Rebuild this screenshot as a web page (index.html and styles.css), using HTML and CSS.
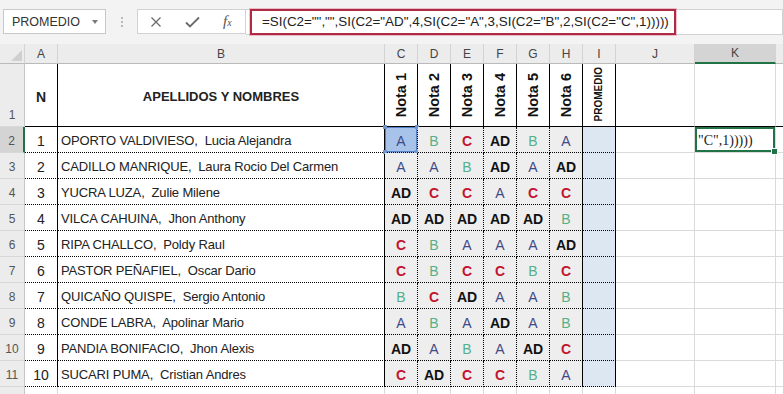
FILE: index.html
```html
<!DOCTYPE html>
<html lang="es">
<head>
    <meta charset="UTF-8">
    <title>Registro de notas</title>
    <link rel="stylesheet" href="styles.css">
</head>
<body>
    <!-- Formula bar -->
    <div class="topbar">
        <div class="namebox">
            <span class="label">PROMEDIO</span>
            <span class="caret"></span>
        </div>
        <div class="grip"><i></i><i></i><i></i></div>
        <div class="fxbox">
            <svg class="icon" width="12" height="12" viewBox="0 0 12 12">
                <path d="M1.5 1.5 L10.5 10.5 M10.5 1.5 L1.5 10.5" stroke="#6b6b6b" stroke-width="1.3" fill="none"/>
            </svg>
            <svg class="icon check" width="15" height="12" viewBox="0 0 15 12">
                <path d="M1 6.5 L5 10.5 L14 1.5" stroke="#6b6b6b" stroke-width="1.8" fill="none"/>
            </svg>
            <span class="fx">f<small>x</small></span>
        </div>
        <div class="formulabar">
            <div class="formula">=SI(C2="","",SI(C2="AD",4,SI(C2="A",3,SI(C2="B",2,SI(C2="C",1)))))</div>
        </div>
    </div>

    <!-- Sheet -->
    <table class="sheet">
        <thead>
            <tr class="col-heads">
                <th class="corner w-row"><svg width="11" height="11" viewBox="0 0 11 11"><path d="M11 0 L11 11 L0 11 Z" fill="#cfcfcf"/></svg></th>
                <th class="w-a">A</th>
                <th class="w-b">B</th>
                <th class="w-n">C</th>
                <th class="w-n">D</th>
                <th class="w-n">E</th>
                <th class="w-n">F</th>
                <th class="w-n">G</th>
                <th class="w-n">H</th>
                <th class="w-n">I</th>
                <th class="w-j">J</th>
                <th class="w-k sel">K</th>
                <th class="w-l"></th>
            </tr>
        </thead>
        <tbody>
            <tr class="title">
                <th class="rh">1</th>
                <td class="num head">N</td>
                <td class="name head">APELLIDOS Y NOMBRES</td>
                <td class="vert"><span>Nota 1</span></td>
                <td class="vert"><span>Nota 2</span></td>
                <td class="vert"><span>Nota 3</span></td>
                <td class="vert"><span>Nota 4</span></td>
                <td class="vert"><span>Nota 5</span></td>
                <td class="vert"><span>Nota 6</span></td>
                <td class="vert prom-head"><span>PROMEDIO</span></td>
                <td class="cell"></td><td class="cell"></td><td class="cell"></td>
            </tr>
            <tr>
                <th class="rh sel">2</th>
                <td class="num">1</td>
                <td class="name">OPORTO VALDIVIESO,  Lucia Alejandra</td>
                <td class="g a ref">A<i class="h tl"></i><i class="h tr"></i><i class="h bl"></i><i class="h br"></i></td>
                <td class="g b">B</td><td class="g c">C</td><td class="g ad">AD</td><td class="g b">B</td><td class="g a">A</td>
                <td class="prom"></td>
                <td class="cell"></td>
                <td class="cell active">"C",1)))))<i class="fill"></i></td>
                <td class="cell"></td>
            </tr>
            <tr>
                <th class="rh">3</th>
                <td class="num">2</td>
                <td class="name">CADILLO MANRIQUE,  Laura Rocio Del Carmen</td>
                <td class="g a">A</td><td class="g a">A</td><td class="g b">B</td><td class="g ad">AD</td><td class="g a">A</td><td class="g ad">AD</td>
                <td class="prom"></td>
                <td class="cell"></td><td class="cell"></td><td class="cell"></td>
            </tr>
            <tr>
                <th class="rh">4</th>
                <td class="num">3</td>
                <td class="name">YUCRA LUZA,  Zulie Milene</td>
                <td class="g ad">AD</td><td class="g c">C</td><td class="g c">C</td><td class="g a">A</td><td class="g c">C</td><td class="g c">C</td>
                <td class="prom"></td>
                <td class="cell"></td><td class="cell"></td><td class="cell"></td>
            </tr>
            <tr>
                <th class="rh">5</th>
                <td class="num">4</td>
                <td class="name">VILCA CAHUINA,  Jhon Anthony</td>
                <td class="g ad">AD</td><td class="g ad">AD</td><td class="g ad">AD</td><td class="g ad">AD</td><td class="g ad">AD</td><td class="g b">B</td>
                <td class="prom"></td>
                <td class="cell"></td><td class="cell"></td><td class="cell"></td>
            </tr>
            <tr>
                <th class="rh">6</th>
                <td class="num">5</td>
                <td class="name">RIPA CHALLCO,  Poldy Raul</td>
                <td class="g c">C</td><td class="g b">B</td><td class="g a">A</td><td class="g a">A</td><td class="g a">A</td><td class="g ad">AD</td>
                <td class="prom"></td>
                <td class="cell"></td><td class="cell"></td><td class="cell"></td>
            </tr>
            <tr>
                <th class="rh">7</th>
                <td class="num">6</td>
                <td class="name">PASTOR PEÑAFIEL,  Oscar Dario</td>
                <td class="g c">C</td><td class="g b">B</td><td class="g c">C</td><td class="g c">C</td><td class="g b">B</td><td class="g c">C</td>
                <td class="prom"></td>
                <td class="cell"></td><td class="cell"></td><td class="cell"></td>
            </tr>
            <tr>
                <th class="rh">8</th>
                <td class="num">7</td>
                <td class="name">QUICAÑO QUISPE,  Sergio Antonio</td>
                <td class="g b">B</td><td class="g c">C</td><td class="g ad">AD</td><td class="g a">A</td><td class="g a">A</td><td class="g b">B</td>
                <td class="prom"></td>
                <td class="cell"></td><td class="cell"></td><td class="cell"></td>
            </tr>
            <tr>
                <th class="rh">9</th>
                <td class="num">8</td>
                <td class="name">CONDE LABRA,  Apolinar Mario</td>
                <td class="g a">A</td><td class="g b">B</td><td class="g a">A</td><td class="g ad">AD</td><td class="g a">A</td><td class="g b">B</td>
                <td class="prom"></td>
                <td class="cell"></td><td class="cell"></td><td class="cell"></td>
            </tr>
            <tr>
                <th class="rh">10</th>
                <td class="num">9</td>
                <td class="name">PANDIA BONIFACIO,  Jhon Alexis</td>
                <td class="g ad">AD</td><td class="g a">A</td><td class="g b">B</td><td class="g a">A</td><td class="g ad">AD</td><td class="g c">C</td>
                <td class="prom"></td>
                <td class="cell"></td><td class="cell"></td><td class="cell"></td>
            </tr>
            <tr>
                <th class="rh">11</th>
                <td class="num">10</td>
                <td class="name">SUCARI PUMA,  Cristian Andres</td>
                <td class="g c">C</td><td class="g ad">AD</td><td class="g c">C</td><td class="g c">C</td><td class="g b">B</td><td class="g a">A</td>
                <td class="prom"></td>
                <td class="cell"></td><td class="cell"></td><td class="cell"></td>
            </tr>
            <!-- row 12 only peeks in at the bottom edge -->
            <tr class="empty">
                <th class="rh"></th>
                <td class="cell"></td><td class="cell"></td>
                <td class="cell"></td><td class="cell"></td><td class="cell"></td><td class="cell"></td><td class="cell"></td><td class="cell"></td><td class="cell"></td>
                <td class="cell"></td><td class="cell"></td><td class="cell"></td>
            </tr>
        </tbody>
    </table>
</body>
</html>
```

FILE: styles.css
```css
/* Global */
body {
    margin: 0;
    width: 783px;
    height: 394px;
    overflow: hidden;
    background-color: #f3f3f3;
    font-family: "Liberation Sans", Arial, sans-serif;
    color: #222;
}

/* Formula bar */
.topbar {
    display: flex;
    align-items: flex-start;
    height: 44px;
    padding: 9px 0 0 3px;
    box-sizing: border-box;
}

.namebox {
    width: 103px;
    height: 25px;
    box-sizing: border-box;
    border: 1px solid #c9c9c9;
    background-color: #fff;
    display: flex;
    align-items: center;
    padding-left: 8px;
    font-size: 12.5px;
    color: #333;
}

.namebox .label {
    flex: 1;
}

.caret {
    width: 0;
    height: 0;
    border-left: 3.5px solid transparent;
    border-right: 3.5px solid transparent;
    border-top: 4px solid #7a7a7a;
    margin-right: 7px;
}

.grip {
    width: 31px;
    display: flex;
    flex-direction: column;
    align-items: center;
    gap: 2px;
    padding-top: 8px;
}

.grip i {
    width: 2px;
    height: 2px;
    background-color: #b8b8b8;
}

.fxbox {
    width: 109px;
    height: 25px;
    box-sizing: border-box;
    border: 1px solid #d2d2d2;
    background-color: #fff;
    display: flex;
    align-items: center;
    padding-left: 12px;
}

.fxbox .check {
    margin-left: 23px;
}

.fx {
    margin-left: 23px;
    font-family: "Liberation Serif", serif;
    font-style: italic;
    font-size: 15px;
    color: #555;
}

.fx small {
    font-size: 10px;
}

.formulabar {
    flex: 1;
    height: 26px;
    box-sizing: border-box;
    background-color: #fff;
    border: 1px solid #d2d2d2;
    border-left: none;
    display: flex;
}

.formula {
    margin-left: 4px;
    margin-top: -1px;
    width: 426px;
    height: 26px;
    box-sizing: border-box;
    border: 2px solid #ad2c44;
    box-shadow: 0 0 0 1px rgba(230, 140, 160, 0.55);
    padding-left: 10px;
    font-size: 13.4px;
    line-height: 22px;
    color: #222;
    white-space: nowrap;
}

/* Sheet */
.sheet {
    border-collapse: separate;
    border-spacing: 0;
    table-layout: fixed;
    width: 796px;
    background-color: #fff;
}

.sheet th,
.sheet td {
    box-sizing: border-box;
    padding: 0;
}

.w-row { width: 25px; }
.w-a { width: 33px; }
.w-b { width: 327px; }
.w-n { width: 33px; }
.w-j { width: 79px; }
.w-k { width: 81px; }
.w-l { width: 20px; }

.sheet tr {
    height: 26px;
}

.sheet tr.col-heads {
    height: 20px;
}

.sheet tr.title {
    height: 63px;
}

.sheet tr.empty {
    height: 20px;
}

.col-heads th {
    height: 20px;
    background-color: #ececec;
    border-right: 1px solid #d3d3d3;
    border-bottom: 1px solid #bababa;
    font-weight: normal;
    font-size: 12px;
    line-height: 14px;
    color: #444;
}

.col-heads th.corner {
    text-align: right;
    vertical-align: bottom;
    padding: 0 2px 2px 0;
    line-height: 0;
}

.col-heads th.sel {
    background-color: #d4d4d4;
    border-bottom: 2px solid #217346;
}

.rh {
    background-color: #ececec;
    border-right: 1px solid #c6c6c6;
    border-bottom: 1px solid #d8d8d8;
    font-weight: normal;
    font-size: 12px;
    color: #555;
    vertical-align: bottom;
    padding-bottom: 4px !important;
    line-height: 14px;
}

.rh.sel {
    background-color: #d4d4d4;
    border-right: 2px solid #217346;
}

/* bordered block A:I */
.num,
.name,
.g,
.prom,
.vert {
    border-right: 1px solid #000;
    border-bottom: 1px dotted #000;
    vertical-align: bottom;
    line-height: 16px;
    padding-bottom: 3px !important;
}

.num {
    text-align: center;
    font-size: 14px;
}

.name {
    font-size: 13px;
    letter-spacing: -0.15px;
    padding-left: 3px !important;
    white-space: pre;
    overflow: hidden;
}

.title td {
    border-bottom: 1px solid #000;
    background-color: #fff;
}

.title .head {
    vertical-align: middle;
    padding: 3px 0 0 0 !important;
    font-weight: bold;
}

.title .num.head {
    font-size: 14px;
}

.title .name.head {
    font-size: 13px;
    letter-spacing: 0;
    text-align: center;
}

.vert {
    text-align: center;
    font-size: 0;
    line-height: 0;
    padding-bottom: 9px !important;
}

.vert span {
    display: inline-block;
    writing-mode: vertical-rl;
    transform: rotate(180deg);
    font-size: 14.5px;
    line-height: 16px;
    font-weight: bold;
    color: #111;
}

.vert.prom-head {
    padding-bottom: 5px !important;
}

.vert.prom-head span {
    font-size: 10px;
    line-height: 12px;
}

/* grade cells */
.g {
    position: relative;
    background-color: #eeeeee;
    border-right-style: dotted;
    text-align: center;
    font-size: 14px;
}

/* column H closes the notes block */
.g:nth-child(9) {
    border-right-style: solid;
}

.g.a { color: #3f4a88; }
.g.b { color: #55b088; }
.g.c { color: #c4132f; font-weight: bold; }
.g.ad { color: #111; font-weight: bold; }

.g.ref {
    background-color: #a8c3ea;
    box-shadow: inset 0 0 0 1px #5582c4;
}

.h {
    position: absolute;
    width: 4px;
    height: 4px;
    background-color: #7094c9;
}

.h.tl { left: -2px; top: -2px; }
.h.tr { right: -2px; top: -2px; }
.h.bl { left: -2px; bottom: -2px; }
.h.br { right: -2px; bottom: -2px; }

.prom {
    background-color: #dde7f1;
}

/* plain grid cells */
.cell {
    border-right: 1px solid #dadada;
    border-bottom: 1px solid #dadada;
}

.cell.active {
    position: relative;
    box-shadow: inset 0 0 0 2px #217346;
    font-family: "Liberation Serif", serif;
    font-size: 14px;
    line-height: 16px;
    padding: 0 0 3px 3px;
    vertical-align: bottom;
    white-space: nowrap;
}

.fill {
    position: absolute;
    right: -3px;
    bottom: -3px;
    width: 5px;
    height: 5px;
    background-color: #217346;
    border: 1px solid #fff;
}
```
